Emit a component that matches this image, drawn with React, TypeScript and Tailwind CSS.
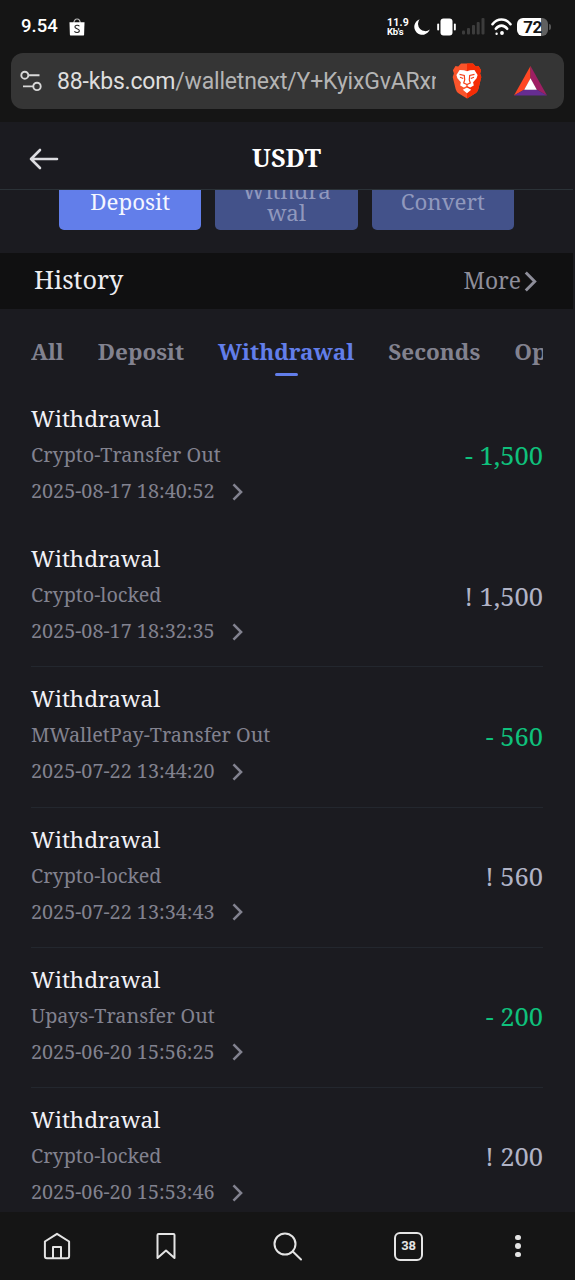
import clsx from 'clsx'

type HistoryRow = {
  id: number
  detail: string
  date: string
  amount: string
  isOut: boolean
}

const tabs = ['All', 'Deposit', 'Withdrawal', 'Seconds', 'Options']

const rows: HistoryRow[] = [
  { id: 1, detail: 'Crypto-Transfer Out', date: '2025-08-17 18:40:52', amount: '- 1,500', isOut: true },
  { id: 2, detail: 'Crypto-locked', date: '2025-08-17 18:32:35', amount: '! 1,500', isOut: false },
  { id: 3, detail: 'MWalletPay-Transfer Out', date: '2025-07-22 13:44:20', amount: '- 560', isOut: true },
  { id: 4, detail: 'Crypto-locked', date: '2025-07-22 13:34:43', amount: '! 560', isOut: false },
  { id: 5, detail: 'Upays-Transfer Out', date: '2025-06-20 15:56:25', amount: '- 200', isOut: true },
  { id: 6, detail: 'Crypto-locked', date: '2025-06-20 15:53:46', amount: '! 200', isOut: false },
]

function Chevron({ className }: { className: string }) {
  return (
    <svg viewBox="0 0 12 20" fill="none" stroke="currentColor" strokeWidth="2.8" className={className}>
      <path d="M1.5 1.5 10 10l-8.5 8.5" />
    </svg>
  )
}

function StatusBar() {
  return (
    <div className="flex h-[53px] items-center pl-[21px] pr-[24px] text-white">
      <span className="w-[36px] text-[18.5px] font-medium">9.54</span>
      <svg viewBox="0 0 16 18" className="ml-[12px] h-[18px] w-4">
        <path d="M4.8 5.500c0-6 6.400-6 6.400 0" fill="none" stroke="#bbb" strokeWidth="1.200" />
        <path d="M.5 4.200h15l-.4 12.200q-.1 1.200-1.300 1.200H2.200q-1.200 0-1.300-1.200z" fill="#fff" />
        <path d="M10.400 8.200c-1-1.500-4.600-1.300-4.500.8.1 2 4.700 1.500 4.500 3.900-.2 2.100-3.700 2-5 .5" fill="none" stroke="#222" strokeWidth="1.100" />
      </svg>
      <div className="ml-auto flex items-center">
        <div className="mr-[4px] w-[23px] whitespace-nowrap text-[10.500px] font-bold leading-[9px]">
          <div className="tracking-[0.2px]">11.9</div>
          <div className="text-[9.500px] tracking-[-0.200px]">Kb's</div>
        </div>
        <svg viewBox="0 0 16 16" fill="#fff" className="h-4 w-4">
          <path d="M5.600.3A8 8 0 1 0 15.800 10.600 7.300 7.300 0 0 1 5.600.3z" />
        </svg>
        <svg viewBox="0 0 19 18" fill="#fff" className="ml-[7px] h-[18px] w-[19px]">
          <rect x="3.500" y=".5" width="12" height="17" rx="3" />
          <rect x=".2" y="5.500" width="1.900" height="7" rx=".9" />
          <rect x="16.900" y="5.500" width="1.900" height="7" rx=".9" />
        </svg>
        <svg viewBox="0 0 23 17" fill="#3c3c3c" className="ml-[6px] h-[17px] w-[23px]">
          <rect x="0" y="12.500" width="3" height="4" rx="1" />
          <rect x="5" y="10" width="3" height="6.500" rx="1" />
          <rect x="10" y="7" width="3" height="9.500" rx="1" />
          <rect x="14.700" y="4" width="3" height="12.500" rx="1" />
          <rect x="19.500" y="0" width="3" height="16.500" rx="1" />
        </svg>
        <svg viewBox="0 0 21 18" fill="none" stroke="#fff" strokeWidth="2.600" strokeLinecap="round" className="ml-[6px] h-[18px] w-[21px]">
          <path d="M1.500 6.200C6.500 0 14.500 0 19.500 6.200" />
          <path d="M4.800 10.800c3.300-4.200 8.100-4.200 11.400 0" />
          <circle cx="11" cy="15" r="1.200" fill="#fff" strokeWidth="1.400" />
          <circle cx="5.600" cy="15.800" r=".6" fill="#fff" strokeWidth="1.200" />
        </svg>
        <div className="ml-[5px] flex h-[18px] w-[31px] items-center justify-center rounded-[6px] bg-linear-to-r from-white from-78% to-[#606060] to-78%">
          <span className="text-[17px] font-bold leading-[18px] tracking-[-0.500px] text-[#151515]">72</span>
        </div>
        <div className="ml-px h-[6px] w-[2px] rounded-r bg-[#555]" />
      </div>
    </div>
  )
}

function BraveLogo() {
  return (
    <svg viewBox="0 0 30 36" className="h-9 w-[30px]">
      <path d="M9 .4h12l2.800 3 2.700-.4 2.600 4.200-1 3.300 1.200 3.600-3 12.200q-.7 2.500-2.800 4L15 35.600 6.500 30.300q-2.100-1.500-2.800-4L.7 14.100l1.200-3.600-1-3.300L3.500 3l2.700.4z" fill="#fb542b" />
      <path d="M15 .4h6l2.800 3 2.700-.4 2.600 4.200-1 3.300 1.200 3.600-3 12.200q-.7 2.500-2.800 4L15 35.600z" fill="#f52c05" />
      <path d="m15 8.200 3-.9 4.400-.3 3.200 5.100-1 3.200-3.500 4 .7 3.100-3.600 2-3.200-1.300-3.200 1.300-3.600-2 .7-3.100-3.500-4-1-3.200L7.600 7l4.400.3zM15 24.600l4.200 2.200-4.200 3.400-4.200-3.400z" fill="#fff" />
      <path d="m7.500 11.300 4.800 1.200.4 4.500-1 3 3.300 1.600 3.300-1.600-1-3 .4-4.500 4.800-1.200M8 14.300l3.200 1.200M22 14.300l-3.200 1.200M15 21.600v3" fill="none" stroke="#f5421a" strokeWidth="1.200" />
    </svg>
  )
}

function AddressBar() {
  return (
    <div className="mx-[11px] flex h-14 items-center rounded-[12px] bg-[#353535] pl-[9px] pr-[17px]">
      <svg viewBox="0 0 22 22" fill="none" stroke="#d8d8d8" strokeWidth="1.900" className="h-[22px] w-[22px] shrink-0">
        <circle cx="4.800" cy="5.200" r="3.500" />
        <path d="M8.500 5.200H19.500M3 16.400h10" />
        <circle cx="17" cy="16.400" r="3.700" />
      </svg>
      <div className="ml-[15px] mt-[2px] w-[379px] overflow-hidden whitespace-nowrap text-[23px] leading-8 tracking-[-0.180px] text-[#b4b4b4]">
        <span className="text-[#dedede]">88-kbs.com</span>/walletnext/Y+KyixGvARxn
      </div>
      <div className="ml-[16px] shrink-0">
        <BraveLogo />
      </div>
      <svg viewBox="0 0 33 30" className="ml-auto h-[30px] w-[33px] shrink-0">
        <path d="M16.500 0 0 29.500l10.500-6 6-11z" fill="#ff4724" />
        <path d="M16.500 0 33 29.500l-10.500-6-6-11z" fill="#9e1f63" />
        <path d="M0 29.500h33l-10.500-6h-12z" fill="#662d91" />
        <path d="m16.500 12.300 6.300 11.400H10.200z" fill="#fff" />
      </svg>
    </div>
  )
}

function ActionButtons() {
  const base = 'flex h-[57px] flex-1 items-center justify-center rounded-[5px] text-center text-[22.300px] leading-[22px]'
  return (
    <div className="flex h-[63px] items-end gap-[14px] overflow-hidden px-[59px] pb-[23px]">
      <button type="button" className={clsx(base, 'bg-[#627eea] text-[#f4f6ff]')}>Deposit</button>
      <button type="button" className={clsx(base, 'bg-[#43528a] text-[#9098bd]')}>
        <span>Withdra<br />wal</span>
      </button>
      <button type="button" className={clsx(base, 'bg-[#43528a] text-[#9098bd]')}>Convert</button>
    </div>
  )
}

function BottomBar() {
  return (
    <div className="flex h-[68px] shrink-0 items-center bg-[#151515] pl-[43px]">
      <svg viewBox="0 0 28 28" fill="none" stroke="#e4e4e4" strokeWidth="2" strokeLinejoin="round" className="h-7 w-7">
        <path d="M14 1.800 1.900 9.500v14.700q0 2 2 2h20.200q2 0 2-2V9.500z" />
        <path d="M10 26V15h8v11" />
      </svg>
      <svg viewBox="0 0 20 28" fill="none" stroke="#e4e4e4" strokeWidth="2" strokeLinejoin="round" className="ml-[85px] h-7 w-5">
        <path d="M1.500 3q0-1 1-1h15q1 0 1 1v23L10 18.500 1.500 26z" />
      </svg>
      <svg viewBox="0 0 30 30" fill="none" stroke="#e4e4e4" strokeWidth="2" strokeLinecap="round" className="ml-[97px] mt-[2px] h-[30px] w-[30px]">
        <circle cx="12" cy="12" r="10.500" />
        <path d="m19.800 19.500 8.200 8" />
      </svg>
      <div className="ml-[91px] flex size-[29px] items-center justify-center rounded-[6px] border-2 border-[#e4e4e4] text-[13px] font-bold tracking-[-0.200px] text-[#e4e4e4]">
        38
      </div>
      <div className="ml-[92px] flex w-[6px] flex-col gap-[3px]">
        <span className="size-[5.500px] rounded-full bg-[#e4e4e4]" />
        <span className="size-[5.500px] rounded-full bg-[#e4e4e4]" />
        <span className="size-[5.500px] rounded-full bg-[#e4e4e4]" />
      </div>
    </div>
  )
}

export default function App() {
  return (
    <div className="flex h-[1280px] w-[575px] flex-col overflow-hidden bg-[#151515] font-[Roboto,sans-serif]">
      <div className="h-[122px] shrink-0">
        <StatusBar />
        <AddressBar />
      </div>

      <div className="min-h-0 flex-1 overflow-hidden bg-[#1b1b20] pr-[2px] font-['Noto_Serif','DejaVu_Serif_Condensed','DejaVu_Serif',serif]">
        <header className="grid h-[68px] grid-cols-3 items-center border-b border-[#2b3237] pb-px">
          <svg viewBox="0 0 30 22" fill="none" stroke="#dcdce0" strokeWidth="2.600" strokeLinecap="round" strokeLinejoin="round" className="ml-[29px] mt-[7px] h-[22px] w-[30px]">
            <path d="M28 11H2M11 2 2 11l9 9" />
          </svg>
          <h1 className="mt-[6px] text-center text-[25.300px] font-bold text-white">USDT</h1>
        </header>

        <ActionButtons />

        <div className="flex h-14 items-center justify-between bg-[#101011] pl-[34px] pr-[36px]">
          <h2 className="pb-[2px] text-[25.300px]  text-[#ececf0]">History</h2>
          <div className="flex items-center text-[#8e8e9a]">
            <span className="text-[22.800px]">More</span>
            <Chevron className="ml-[3px] h-[21px] w-[13px]" />
          </div>
        </div>

        <nav className="ml-[31px] mr-[30px] flex h-[78px] gap-[34px] overflow-hidden pt-[25px] text-[22.500px] font-bold text-[#82828f]">
          {tabs.map((tab) => (
            <div
              key={tab}
              className={clsx('flex flex-col items-center leading-9', tab === 'Withdrawal' && 'text-[#627eea]')}
            >
              {tab}
              {tab === 'Withdrawal' ? <span className="mt-[3px] h-[3px] w-[23px] shrink-0 rounded-sm bg-[#627eea]" /> : null}
            </div>
          ))}
        </nav>

        <div className="ml-[31px] mr-[30px]">
          {rows.map((row) => (
            <div
              key={row.id}
              className={clsx(
                'flex h-[140.200px] items-center justify-between border-b',
                row.id === 1 ? 'border-transparent' : 'border-[#23272e]',
              )}
            >
              <div className="pb-[3px] text-[19.800px] leading-9 text-[#82828f]">
                <div className="text-[22.600px] text-[#f1f1f6]">Withdrawal</div>
                <div>{row.detail}</div>
                <div className="flex items-center">
                  {row.date}
                  <Chevron className="ml-[17px] mt-px h-[18px] w-[11px]" />
                </div>
              </div>
              <div className={clsx('pb-[2px] text-[25.500px]', row.isOut ? 'text-[#0fc17c]' : 'text-[#b0b3c6]')}>{row.amount}</div>
            </div>
          ))}
        </div>
      </div>

      <BottomBar />
    </div>
  )
}
